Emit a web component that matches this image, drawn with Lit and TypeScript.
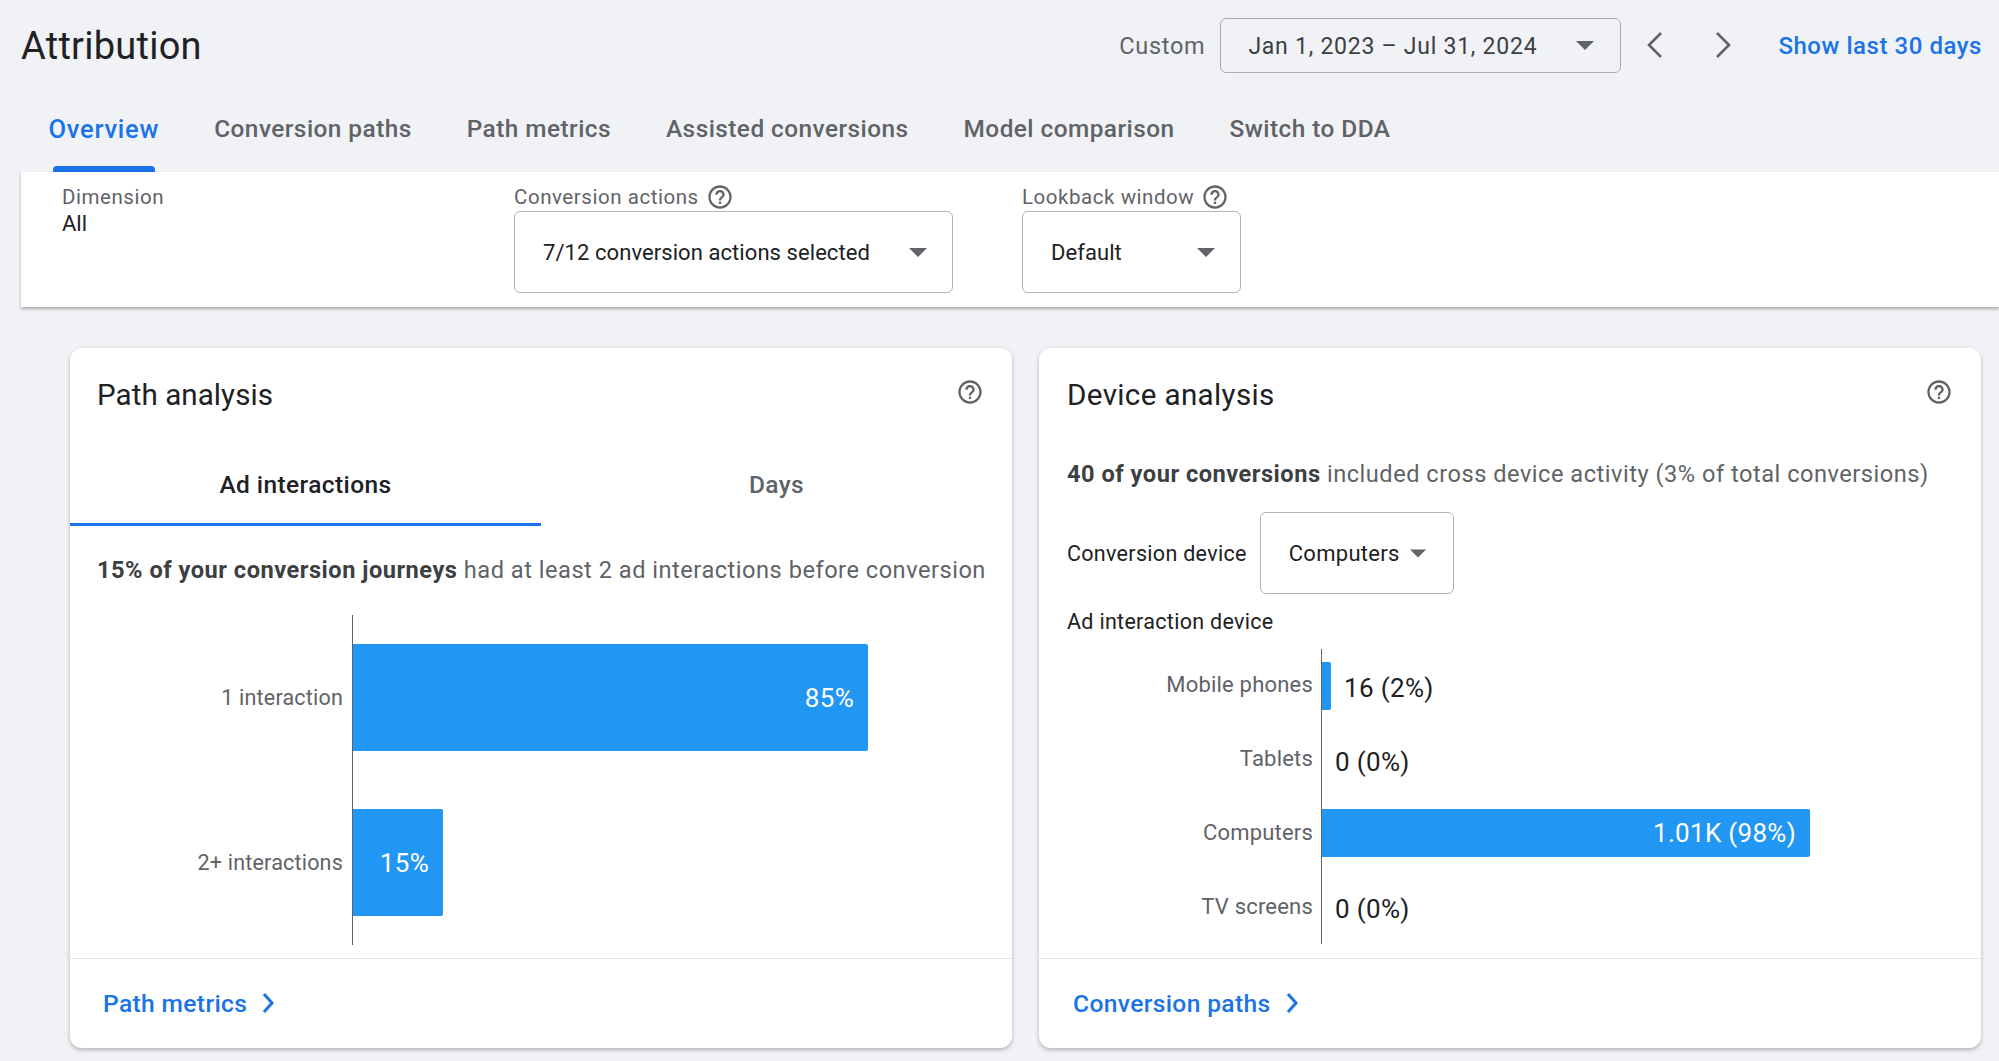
import { LitElement, html, css } from "lit";
import { customElement } from "lit/decorators.js";

const helpIcon = html`<svg class="help" viewBox="0 0 24 24" fill="#5f6368"><path d="M11 18h2v-2h-2v2zm1-16C6.48 2 2 6.48 2 12s4.48 10 10 10 10-4.48 10-10S17.52 2 12 2zm0 18c-4.41 0-8-3.59-8-8s3.59-8 8-8 8 3.59 8 8-3.59 8-8 8zm0-14c-2.21 0-4 1.79-4 4h2c0-1.1.9-2 2-2s2 .9 2 2c0 2-3 1.75-3 5h2c0-2.25 3-2.5 3-5 0-2.21-1.79-4-4-4z"/></svg>`;
const caret = html`<svg class="caret" viewBox="0 0 18 9"><path d="M0 0h18L9 9z" fill="#5f6368"/></svg>`;
const linkChevron = html`<svg class="link-chev" viewBox="0 0 12 22" fill="none" stroke="#1a73e8" stroke-width="3"><path d="M2 2l8 9-8 9"/></svg>`;

const tabs = ["Overview", "Conversion paths", "Path metrics", "Assisted conversions", "Model comparison", "Switch to DDA"];

const pathRows = [
  { label: "1 interaction", width: 515, value: "85%" },
  { label: "2+ interactions", width: 90, value: "15%" },
];
const deviceRows = [
  { label: "Mobile phones", width: 9, value: "16 (2%)", inside: false, gap: 13 },
  { label: "Tablets", width: 0, value: "0 (0%)", inside: false, gap: 13 },
  { label: "Computers", width: 488, value: "1.01K (98%)", inside: true, gap: 0 },
  { label: "TV screens", width: 0, value: "0 (0%)", inside: false, gap: 13 },
];

@customElement("app-root")
export class AppRoot extends LitElement {
  static styles = css`
    :host {
      display: block;
      width: 1999px;
      height: 1061px;
      overflow: hidden;
      background: #f1f2f5;
      font-family: Roboto, "Liberation Sans", sans-serif;
      color: #3c4043;
    }
    .header {
      display: flex;
      align-items: center;
      height: 90px;
      padding: 0 17px 0 21px;
      box-sizing: border-box;
    }
    .title {
      font-size: 38px;
      color: #202124;
      flex: 1;
      letter-spacing: 0.25px;
      padding-top: 1px;
    }
    .custom {
      font-size: 23.5px;
      color: #5f6368;
      letter-spacing: 0.7px;
      margin-right: 15px;
      padding-top: 2px;
    }
    .date {
      display: flex;
      align-items: center;
      width: 401px;
      height: 55px;
      box-sizing: border-box;
      border: 1.5px solid #a9adb1;
      border-radius: 6px;
      padding-left: 27px;
      font-size: 23px;
      letter-spacing: 0.75px;
      color: #3c4043;
    }
    .date span { width: 328px; white-space: nowrap; padding-top: 2px; }
    .caret { width: 18px; height: 9px; flex: none; }
    .nav {
      width: 68px;
      display: flex;
      justify-content: center;
    }
    .nav svg { width: 18px; height: 28px; display: block; }
    .show {
      margin-left: 21px;
      font-size: 24px;
      font-weight: 500;
      letter-spacing: 0.55px;
      color: #1a73e8;
      white-space: nowrap;
      padding-top: 2px;
    }
    .tabs {
      display: flex;
      gap: 55px;
      height: 82px;
      padding-left: 48.5px;
      box-sizing: border-box;
    }
    .tab {
      display: flex;
      flex-direction: column;
      padding-top: 25px;
      font-size: 24.4px;
      line-height: 28px;
      font-weight: 500;
      color: #5f6368;
      letter-spacing: 0.45px;
      white-space: nowrap;
    }
    .tab.active { color: #1a73e8; font-size: 25.5px; letter-spacing: 0.75px; }
    .tab i {
      margin: auto 4px 0;
      height: 6px;
      background: #1a73e8;
      border-radius: 4px 4px 0 0;
    }
    .filters {
      display: flex;
      height: 135px;
      margin-left: 20.5px;
      padding-top: 14px;
      box-sizing: border-box;
      background: #fff;
      box-shadow: 0 2px 3px rgba(60, 64, 67, 0.4);
      position: relative;
    }
    .filter-label {
      display: flex;
      align-items: center;
      gap: 7px;
      height: 22px;
      font-size: 20.5px;
      letter-spacing: 0.55px;
      color: #5f6368;
      white-space: nowrap;
    }
    .dimension { width: 493.5px; padding-left: 41.5px; box-sizing: border-box; }
    .dim-value { margin-top: 5px; font-size: 22px; line-height: 22px; color: #202124; }
    .conv { width: 438.5px; margin-right: 69.5px; }
    .look { width: 219px; }
    .help { width: 28px; height: 28px; flex: none; display: block; }
    .select {
      display: flex;
      align-items: center;
      justify-content: space-between;
      height: 82px;
      margin-top: 2.5px;
      box-sizing: border-box;
      background: #fff;
      border: 1.5px solid #b0b4b8;
      border-radius: 6px;
      padding: 1px 25px 0 28px;
      font-size: 22px;
      letter-spacing: 0.07px;
      color: #202124;
      white-space: nowrap;
    }
    .cards {
      display: flex;
      gap: 27px;
      margin-top: 41px;
      padding-left: 70px;
    }
    .card {
      display: flex;
      flex-direction: column;
      width: 942px;
      height: 700px;
      background: #fff;
      border-radius: 12px;
      box-shadow: 0 2px 4px rgba(60, 64, 67, 0.35);
    }
    .head {
      display: flex;
      justify-content: space-between;
      align-items: flex-start;
      padding: 30px 28px 0 27px;
      height: 64px;
      box-sizing: border-box;
    }
    .second .head { padding-left: 28px; }
    .card-title {
      font-size: 29.6px;
      line-height: 34px;
      color: #202124;
      letter-spacing: 0.05px;
    }
    .second .card-title { letter-spacing: 0.35px; }
    .ctabs {
      display: grid;
      grid-template-columns: 1fr 1fr;
      margin-top: 34px;
      height: 80px;
    }
    .ctab {
      display: flex;
      align-items: center;
      justify-content: center;
      box-sizing: border-box;
      border-bottom: 3px solid transparent;
      font-size: 24.5px;
      font-weight: 500;
      letter-spacing: 0.4px;
      color: #5f6368;
    }
    .ctab.active { color: #202124; border-bottom-color: #1a73e8; }
    .sentence {
      padding: 0 27px;
      font-size: 23.6px;
      line-height: 28px;
      letter-spacing: 0.51px;
      color: #5f6368;
      white-space: nowrap;
    }
    .second .sentence { padding-left: 28px; }
    .sentence b { font-weight: 700; color: #3c4043; }
    .s1 { margin-top: 30px; }
    .s2 { margin-top: 48px; }
    .chart { display: grid; }
    .chart1 { margin-top: 31px; height: 330px; grid-template-rows: repeat(2, 1fr); }
    .chart2 { margin-top: 16px; height: 295px; grid-template-rows: repeat(4, 1fr); }
    .row { display: grid; grid-template-columns: 282px 1fr; }
    .row-label {
      align-self: center;
      text-align: right;
      padding-right: 9px;
      font-size: 21.5px;
      letter-spacing: 0.2px;
      color: #5f6368;
      white-space: nowrap;
    }
    .chart2 .row-label { font-size: 22px; padding-right: 8px; transform: translateY(-1px); }
    .track {
      display: flex;
      align-items: center;
      border-left: 1.5px solid #5f6368;
    }
    .bar {
      display: flex;
      align-items: center;
      justify-content: flex-end;
      flex: none;
      background: #2196f3;
      border-radius: 0 2px 2px 0;
      color: #fff;
      font-size: 26px;
      letter-spacing: 0.3px;
      box-sizing: border-box;
      padding-right: 14px;
      white-space: nowrap;
    }
    .chart1 .bar { height: 107px; }
    .chart2 .bar { height: 48px; }
    .chart2 .bar.thin { padding: 0; }
    .outside {
      font-size: 26px;
      color: #202124;
      letter-spacing: 0.35px;
      white-space: nowrap;
      transform: translateY(1.5px);
    }
    .device-row {
      display: flex;
      align-items: center;
      gap: 13px;
      margin-top: 24px;
      padding-left: 28px;
    }
    .plain {
      font-size: 21.5px;
      letter-spacing: 0.3px;
      color: #202124;
      white-space: nowrap;
    }
    .device-row .select {
      width: 194px;
      margin-top: 0;
      padding: 0 27px 0 28px;
      letter-spacing: 0.3px;
    }
    .device-row .caret { width: 16px; }
    .ad-label { margin-top: 17px; padding-left: 28px; line-height: 22px; }
    .footer {
      display: flex;
      align-items: center;
      gap: 15px;
      margin-top: auto;
      height: 90px;
      box-sizing: border-box;
      border-top: 1px solid #e4e6e8;
      padding: 0 0 1px 33px;
      font-size: 24.6px;
      font-weight: 500;
      letter-spacing: 0.35px;
      color: #1a73e8;
    }
    .second .footer { padding-left: 34px; }
    .link-chev { width: 12px; height: 22px; flex: none; }
  `;

  private chart(rows: { label: string; width: number; value: string; inside?: boolean; gap?: number }[], cls: string) {
    return html`<div class="chart ${cls}">
      ${rows.map((r) => {
        const inside = r.inside !== false;
        return html`<div class="row">
          <div class="row-label">${r.label}</div>
          <div class="track">
            ${r.width
              ? html`<div class="bar ${inside ? "" : "thin"}" style="width:${r.width}px">${inside ? r.value : ""}</div>`
              : ""}
            ${inside ? "" : html`<div class="outside" style="margin-left:${r.gap}px">${r.value}</div>`}
          </div>
        </div>`;
      })}
    </div>`;
  }

  render() {
    return html`
      <div class="header">
        <div class="title">Attribution</div>
        <div class="custom">Custom</div>
        <div class="date"><span>Jan 1, 2023 – Jul 31, 2024</span>${caret}</div>
        <div class="nav">
          <svg viewBox="0 0 18 28" fill="none" stroke="#5f6368" stroke-width="2.6"><path d="M15 2L3 14l12 12"/></svg>
        </div>
        <div class="nav">
          <svg viewBox="0 0 18 28" fill="none" stroke="#5f6368" stroke-width="2.6"><path d="M3 2l12 12L3 26"/></svg>
        </div>
        <div class="show">Show last 30 days</div>
      </div>

      <div class="tabs">
        ${tabs.map(
          (t, i) => html`<div class="tab ${i === 0 ? "active" : ""}">${t}${i === 0 ? html`<i></i>` : ""}</div>`
        )}
      </div>

      <div class="filters">
        <div class="dimension">
          <div class="filter-label">Dimension</div>
          <div class="dim-value">All</div>
        </div>
        <div class="conv">
          <div class="filter-label">Conversion actions ${helpIcon}</div>
          <div class="select">7/12 conversion actions selected ${caret}</div>
        </div>
        <div class="look">
          <div class="filter-label">Lookback window ${helpIcon}</div>
          <div class="select">Default ${caret}</div>
        </div>
      </div>

      <div class="cards">
        <section class="card">
          <div class="head"><div class="card-title">Path analysis</div>${helpIcon}</div>
          <div class="ctabs">
            <div class="ctab active">Ad interactions</div>
            <div class="ctab">Days</div>
          </div>
          <div class="sentence s1"><b>15% of your conversion journeys</b> had at least 2 ad interactions before conversion</div>
          ${this.chart(pathRows, "chart1")}
          <div class="footer">Path metrics ${linkChevron}</div>
        </section>

        <section class="card second">
          <div class="head"><div class="card-title">Device analysis</div>${helpIcon}</div>
          <div class="sentence s2"><b>40 of your conversions</b> included cross device activity (3% of total conversions)</div>
          <div class="device-row">
            <div class="plain">Conversion device</div>
            <div class="select">Computers ${caret}</div>
          </div>
          <div class="plain ad-label">Ad interaction device</div>
          ${this.chart(deviceRows, "chart2")}
          <div class="footer">Conversion paths ${linkChevron}</div>
        </section>
      </div>
    `;
  }
}
